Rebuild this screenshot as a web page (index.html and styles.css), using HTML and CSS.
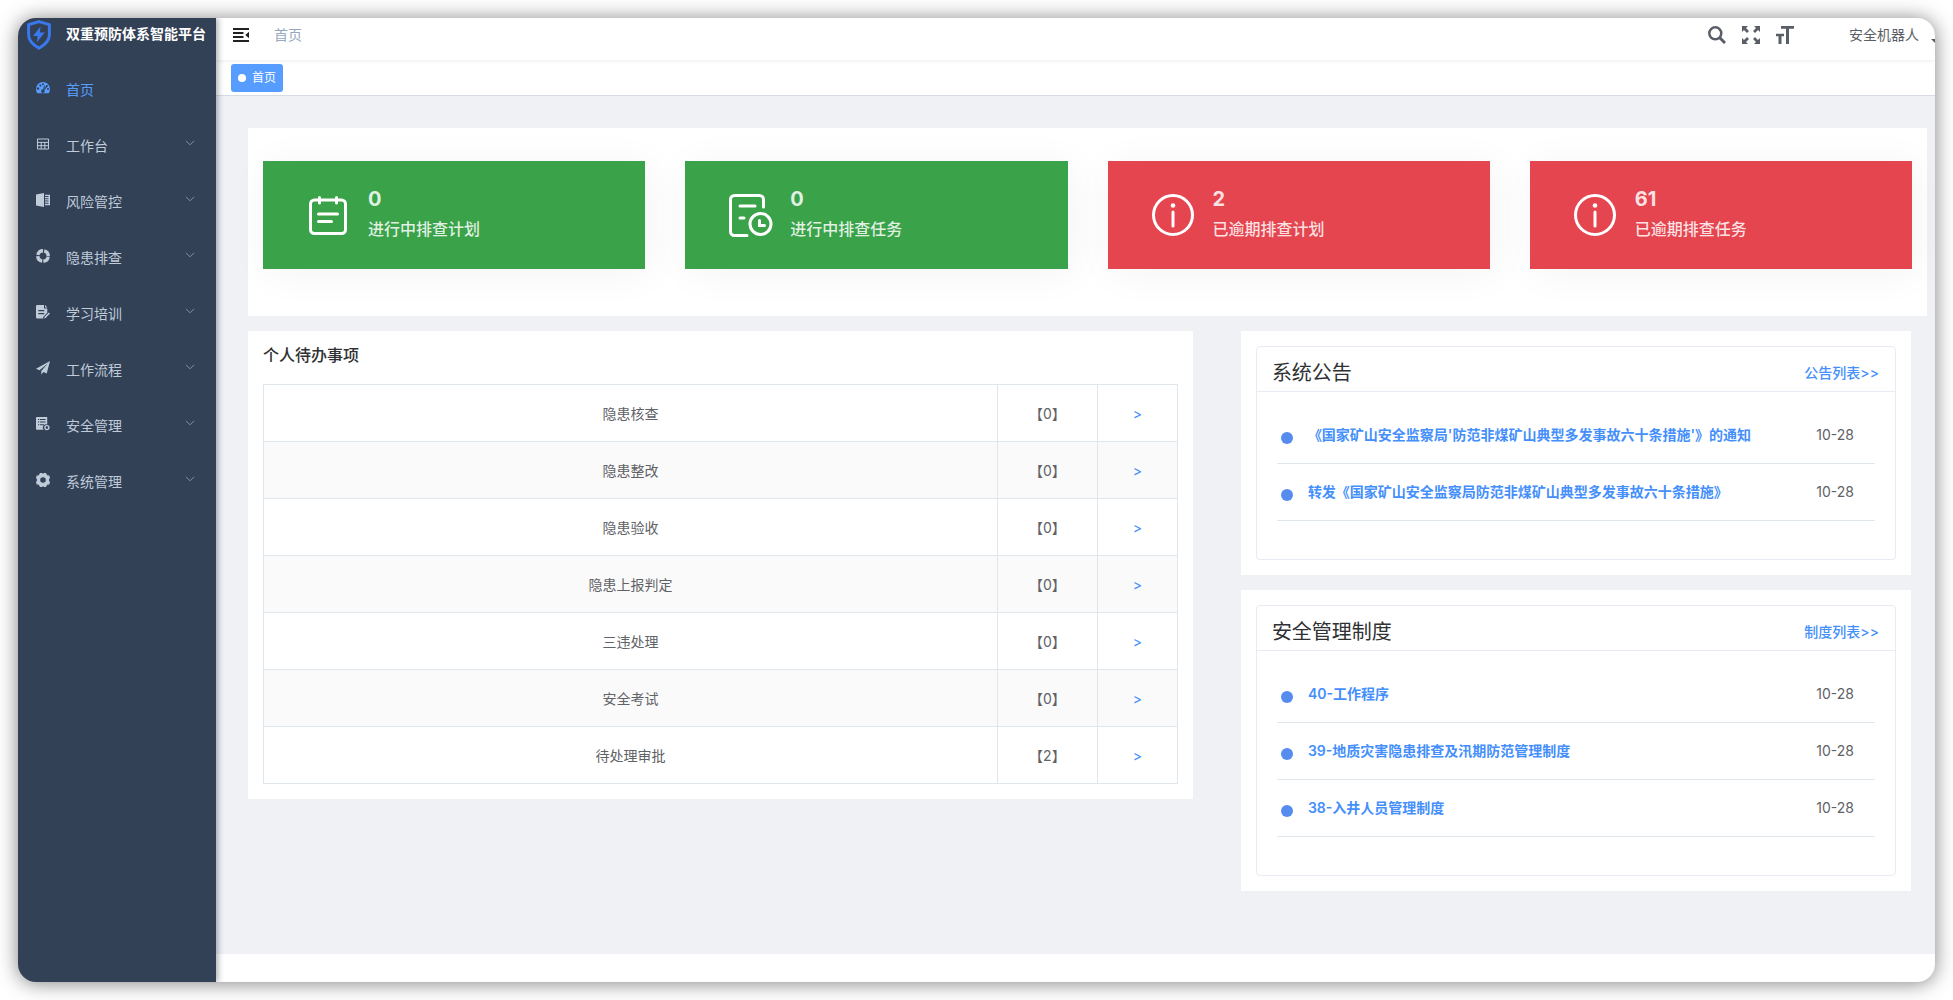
FILE: index.html
```html
<!DOCTYPE html>
<html lang="zh-CN">
<head>
<meta charset="utf-8">
<meta name="viewport" content="width=device-width, initial-scale=1">
<title>双重预防体系智能平台</title>
<link rel="stylesheet" href="styles.css">
</head>
<body>
<div class="window">
  <aside class="sidebar">
    <a class="logo" href="#">
      <svg class="logo-icon" viewBox="0 0 24 30" aria-hidden="true"><path d="M12 1.6 22.4 4.6V15c0 5.6-4.2 9.6-10.4 13.2C5.800 24.600 1.600 20.600 1.600 15V4.600z" fill="none" stroke="#3a78ee" stroke-width="3" stroke-linejoin="round"/><path d="M13.600 6.500 6 16h4.700l-1 6.500L17.800 12.600h-5z" fill="#3a78ee"/></svg>
      <span>双重预防体系智能平台</span>
    </a>
    <nav class="menu">
      <a class="menu-item active" href="#">
        <svg class="menu-icon" viewBox="0 0 14 14" aria-hidden="true"><path fill-rule="evenodd" d="M7 1a7 7 0 0 0-7 7c0 1.700.5 3.100 1.300 4.300h11.400A7.600 7.600 0 0 0 14 8a7 7 0 0 0-7-7zM3 6.900a1 1 0 1 1-2 1.300A1 1 0 0 1 3 6.900zM4.100 3.600a1 1 0 1 1-.6 1.500 1 1 0 0 1 .6-1.500zM7 2.200a1 1 0 1 1 0 2 1 1 0 0 1 0-2zM10 4.700a1 1 0 1 1 1 1.200L8.300 9.200a1.700 1.700 0 1 1-1.200-.7l1-3.900.9.200-.9 3.900zM12 7a1 1 0 1 1 0 2 1 1 0 0 1 0-2z"/></svg>
        <span>首页</span>
      </a>
      <button class="menu-item" type="button">
        <svg class="menu-icon" viewBox="0 0 14 14" aria-hidden="true"><path fill="none" stroke="currentColor" d="M1.500 2h11v10h-11zM1.500 5.400h11M1.500 8.700h11M5.200 5.400V12M8.800 5.400V12"/></svg>
        <span>工作台</span>
        <svg class="chevron" viewBox="0 0 10 6" aria-hidden="true"><path d="M1 .8 5 4.800 9 .8"/></svg>
      </button>
      <button class="menu-item" type="button">
        <svg class="menu-icon" viewBox="0 0 14 14" aria-hidden="true"><path d="M0 1.500 8 0v14l-8-1.500zM9 1.800h5v10.400H9v-1.500h3.500v-1H9V8.500h3.500v-1H9V6.300h3.500v-1H9V4.100h3.500v-1H9z"/></svg>
        <span>风险管控</span>
        <svg class="chevron" viewBox="0 0 10 6" aria-hidden="true"><path d="M1 .8 5 4.800 9 .8"/></svg>
      </button>
      <button class="menu-item" type="button">
        <svg class="menu-icon" viewBox="0 0 14 14" aria-hidden="true"><circle cx="7" cy="7" r="5.200" fill="none" stroke="currentColor" stroke-width="3.400" stroke-dasharray="6.968 1.200" stroke-dashoffset="-.6"/></svg>
        <span>隐患排查</span>
        <svg class="chevron" viewBox="0 0 10 6" aria-hidden="true"><path d="M1 .8 5 4.800 9 .8"/></svg>
      </button>
      <button class="menu-item" type="button">
        <svg class="menu-icon" viewBox="0 0 14 14" aria-hidden="true"><path fill-rule="evenodd" d="M1.200 0H8v3.500h3.300v4.300L7.200 12v1.500h-6A1.200 1.200 0 0 1 0 12.300V1.200A1.200 1.200 0 0 1 1.200 0zM2.300 5v1.200h6V5zm0 3v1.200h6V8zM9 0l2.300 2.500H9zM12.900 7.500l1.100 1.100L9.700 13l-1.500.5.400-1.700z"/></svg>
        <span>学习培训</span>
        <svg class="chevron" viewBox="0 0 10 6" aria-hidden="true"><path d="M1 .8 5 4.800 9 .8"/></svg>
      </button>
      <button class="menu-item" type="button">
        <svg class="menu-icon" viewBox="0 0 14 14" aria-hidden="true"><path d="M14 0 0 7.800l3.500 1.500L12 2.200 5.300 10v3.700l2-2.700 3.400 1.400z"/></svg>
        <span>工作流程</span>
        <svg class="chevron" viewBox="0 0 10 6" aria-hidden="true"><path d="M1 .8 5 4.800 9 .8"/></svg>
      </button>
      <button class="menu-item" type="button">
        <svg class="menu-icon" viewBox="0 0 14 14" aria-hidden="true"><path fill-rule="evenodd" d="M.8 0h10.400v7.400a3.300 3.300 0 0 0-3.600 5.300H.8A.8.800 0 0 1 0 12V.8A.8.800 0 0 1 .8 0zM2 2v1h1.200V2zm2 0v1h5.500V2zM2 4.600v1h1.200v-1zm2 0v1h5.500v-1zM2 7.200v1h1.200v-1zm2 0v1h4v-1z"/><circle cx="10.900" cy="10.600" r="2" fill="none" stroke="currentColor" stroke-width="1.400"/></svg>
        <span>安全管理</span>
        <svg class="chevron" viewBox="0 0 10 6" aria-hidden="true"><path d="M1 .8 5 4.800 9 .8"/></svg>
      </button>
      <button class="menu-item" type="button">
        <svg class="menu-icon" viewBox="0 0 14 14" aria-hidden="true"><path fill-rule="evenodd" d="M4 0h2l1 .8L8 0h2l1.200 2.300 2 .3.800 2L12.900 7l1.100 2.400-.8 2-2 .3L10 14H8l-1-.8-1 .8H4l-1.200-2.300-2-.3-.8-2L1.100 7 0 4.600l.8-2 2-.3zM7 4.200a2.800 2.800 0 1 0 0 5.600 2.800 2.800 0 0 0 0-5.600z"/></svg>
        <span>系统管理</span>
        <svg class="chevron" viewBox="0 0 10 6" aria-hidden="true"><path d="M1 .8 5 4.800 9 .8"/></svg>
      </button>
    </nav>
  </aside>

  <div class="main">
    <header class="navbar">
      <button class="icon-button" type="button" aria-label="收起菜单">
        <svg class="fold-icon" viewBox="0 0 16 14" aria-hidden="true"><path d="M0 0h16v2H0zM0 4h10.500v2H0zM0 8h10.500v2H0zM0 12h16v2H0zM16 3.800v6.400L12.300 7z"/></svg>
      </button>
      <span class="breadcrumb">首页</span>
      <div class="tools">
        <button class="icon-button" type="button" aria-label="搜索">
          <svg class="tool-icon" viewBox="0 0 18 18" aria-hidden="true"><g fill="none" stroke="currentColor"><circle cx="7.300" cy="7.300" r="6" stroke-width="2.500"/><path d="M11.800 11.800 17 17" stroke-width="3"/></g></svg>
        </button>
        <button class="icon-button" type="button" aria-label="全屏">
          <svg class="tool-icon" viewBox="0 0 18 18" aria-hidden="true"><path d="M0 0h6L4 2l3 3-2 2-3-3-2 2zM18 0v6l-2-2-3 3-2-2 3-3-2-2zM0 18v-6l2 2 3-3 2 2-3 3 2 2zM18 18h-6l2-2-3-3 2-2 3 3 2-2z"/></svg>
        </button>
        <button class="icon-button" type="button" aria-label="字号">
          <svg class="tool-icon" viewBox="0 0 18 18" aria-hidden="true"><path d="M5 0h13v2.800h-5V18h-3V2.800H5zM0 7.700h8v2.600H5.500V18H2.500v-7.700H0z"/></svg>
        </button>
        <button class="user" type="button">安全机器人 <svg class="caret" viewBox="0 0 10 5" aria-hidden="true"><path d="M0 0h10L5 5z"/></svg></button>
      </div>
    </header>

    <div class="tags">
      <a class="tag" href="#">首页</a>
    </div>

    <main class="content">
      <section class="stats">
        <a class="stat green" href="#">
          <svg class="stat-icon" viewBox="0 0 50 50" aria-hidden="true"><rect x="7.500" y="10" width="35" height="33.500" rx="4"/><path d="M16.500 7.500v5.500M33.500 7.500v5.500M15.500 24h19M15.500 31.500h13"/></svg>
          <span class="stat-text"><strong>0</strong><span>进行中排查计划</span></span>
        </a>
        <a class="stat green" href="#">
          <svg class="stat-icon" viewBox="0 0 50 50" aria-hidden="true"><path d="M22 45.500H9.500a4 4 0 0 1-4-4v-32a4 4 0 0 1 4-4h25a4 4 0 0 1 4 4V17M15 16h15M15 28h4M34.500 30.500v5h5"/><circle cx="35.500" cy="34" r="10.500"/></svg>
          <span class="stat-text"><strong>0</strong><span>进行中排查任务</span></span>
        </a>
        <a class="stat red" href="#">
          <svg class="stat-icon" viewBox="0 0 50 50" aria-hidden="true"><circle cx="25" cy="25" r="19.500"/><path d="M25 22v14"/><circle class="dot" cx="25" cy="15.500" r="2.300"/></svg>
          <span class="stat-text"><strong>2</strong><span>已逾期排查计划</span></span>
        </a>
        <a class="stat red" href="#">
          <svg class="stat-icon" viewBox="0 0 50 50" aria-hidden="true"><circle cx="25" cy="25" r="19.500"/><path d="M25 22v14"/><circle class="dot" cx="25" cy="15.500" r="2.300"/></svg>
          <span class="stat-text"><strong>61</strong><span>已逾期排查任务</span></span>
        </a>
      </section>

      <div class="columns">
        <section class="panel">
          <h2 class="panel-title">个人待办事项</h2>
          <table class="todo">
            <colgroup><col><col class="col-count"><col class="col-link"></colgroup>
            <tbody>
              <tr><td>隐患核查</td><td>【0】</td><td><a href="#">&gt;</a></td></tr>
              <tr><td>隐患整改</td><td>【0】</td><td><a href="#">&gt;</a></td></tr>
              <tr><td>隐患验收</td><td>【0】</td><td><a href="#">&gt;</a></td></tr>
              <tr><td>隐患上报判定</td><td>【0】</td><td><a href="#">&gt;</a></td></tr>
              <tr><td>三违处理</td><td>【0】</td><td><a href="#">&gt;</a></td></tr>
              <tr><td>安全考试</td><td>【0】</td><td><a href="#">&gt;</a></td></tr>
              <tr><td>待处理审批</td><td>【2】</td><td><a href="#">&gt;</a></td></tr>
            </tbody>
          </table>
        </section>

        <div class="side">
          <section class="panel">
            <div class="card">
              <div class="card-head"><h2>系统公告</h2><a href="#">公告列表&gt;&gt;</a></div>
              <ul class="news">
                <li><a href="#">《国家矿山安全监察局'防范非煤矿山典型多发事故六十条措施'》的通知</a><time>10-28</time></li>
                <li><a href="#">转发《国家矿山安全监察局防范非煤矿山典型多发事故六十条措施》</a><time>10-28</time></li>
              </ul>
            </div>
          </section>
          <section class="panel">
            <div class="card">
              <div class="card-head"><h2>安全管理制度</h2><a href="#">制度列表&gt;&gt;</a></div>
              <ul class="news">
                <li><a href="#">40-工作程序</a><time>10-28</time></li>
                <li><a href="#">39-地质灾害隐患排查及汛期防范管理制度</a><time>10-28</time></li>
                <li><a href="#">38-入井人员管理制度</a><time>10-28</time></li>
              </ul>
            </div>
          </section>
        </div>
      </div>
    </main>
  </div>
</div>
</body>
</html>
```
FILE: styles.css
```css
*,
*::before {
  box-sizing: border-box;
}

body {
  margin: 0;
  min-height: 100vh;
  padding: 18px;
  display: flex;
  background: #fff;
  color: #606266;
  font: 14px/20px Inter, "Noto Sans CJK SC", sans-serif;
}

a {
  color: #448ffb;
  text-decoration: none;
}

button {
  border: 0;
  padding: 0;
  background: none;
  color: inherit;
  font: inherit;
  cursor: pointer;
}

svg {
  display: block;
  flex: none;
  fill: currentColor;
}

h2 {
  margin: 0;
}

.window {
  flex: 1;
  min-width: 0;
  display: flex;
  overflow: hidden;
  border-radius: 18px;
  background: #fff;
  box-shadow: 0 1px 20px rgba(0, 0, 0, .5);
}

/* Sidebar */
.sidebar {
  z-index: 1;
  flex: none;
  width: 198px;
  background: #334157;
  box-shadow: 2px 0 6px rgba(0, 21, 41, .35);
}

.logo {
  display: flex;
  align-items: flex-start;
  gap: 15px;
  height: 44px;
  padding: 2px 0 0 9px;
  color: #fff;
  font-weight: 600;
  line-height: 28px;
  white-space: nowrap;
}

.logo-icon {
  width: 24px;
  height: 30px;
}

.menu-item {
  display: flex;
  align-items: center;
  width: 100%;
  height: 56px;
  padding: 0 21px 0 18px;
  color: #bfcbd9;
}

.menu-item.active {
  color: #579dff;
}

.menu-icon {
  width: 14px;
  height: 14px;
  margin: 0 16px 4px 0;
}

.chevron {
  width: 10px;
  height: 6px;
  margin: 0 0 6px auto;
  fill: none;
  stroke: #8691a0;
}

/* Header */
.main {
  flex: 1;
  min-width: 0;
  display: flex;
  flex-direction: column;
  padding-bottom: 28px;
}

.navbar {
  display: flex;
  align-items: center;
  height: 42px;
  padding: 0 0 8px 17px;
  box-shadow: 0 1px 4px rgba(0, 21, 41, .08);
}

.fold-icon {
  width: 16px;
  height: 14px;
  color: #222;
}

.breadcrumb {
  margin-left: 25px;
  color: #97a8be;
}

.tools {
  display: flex;
  align-items: center;
  gap: 16px;
  margin: 0 -6px 0 auto;
  color: #5a5e66;
}

.tool-icon {
  width: 18px;
  height: 18px;
}

.user {
  display: flex;
  align-items: center;
  gap: 12px;
  margin-left: 39px;
}

.caret {
  width: 10px;
  height: 5px;
  margin-top: 12px;
}

.tags {
  display: flex;
  height: 36px;
  padding: 4px 15px;
  border-bottom: 1px solid #d8dce5;
}

.tag {
  display: flex;
  align-items: center;
  gap: 6px;
  height: 28px;
  padding: 0 7px;
  border-radius: 3px;
  background: #579dff;
  color: #fff;
  font-size: 12px;
}

.tag::before {
  content: "";
  width: 8px;
  height: 8px;
  border-radius: 50%;
  background: #fff;
}

/* Content */
.content {
  flex: 1;
  padding: 32px 8px 32px 32px;
  background: #f0f1f5;
}

.stats {
  display: grid;
  grid-template-columns: repeat(4, 1fr);
  gap: 40px;
  padding: 33px 15px 47px;
  background: #fff;
}

.stat {
  display: flex;
  align-items: center;
  gap: 15px;
  height: 108px;
  padding-left: 40px;
  box-shadow: 4px 4px 40px rgba(0, 0, 0, .05);
  color: #fff;
}

.green {
  background: #3aa249;
}

.red {
  background: #e5454f;
}

.stat-icon {
  width: 50px;
  height: 50px;
  fill: none;
  stroke: #fff;
  stroke-width: 3;
  stroke-linecap: round;
}

.stat-icon .dot {
  fill: #fff;
  stroke: none;
}

.stat-text {
  display: grid;
  gap: 6px;
  padding-bottom: 2px;
  color: rgba(255, 255, 255, .85);
  font-size: 16px;
  font-weight: 500;
  line-height: 24px;
}

.stat-text strong {
  font-size: 20px;
  font-weight: 700;
}

.columns {
  display: grid;
  grid-template-columns: 141fr 100fr;
  align-items: start;
  gap: 48px;
  margin: 15px 16px 0 0;
}

.side {
  display: grid;
  gap: 15px;
}

.panel {
  padding: 15px;
  background: #fff;
}

.panel-title {
  margin-bottom: 20px;
  color: #303133;
  font-size: 16px;
  font-weight: 500;
  line-height: 18px;
}

.todo {
  width: 100%;
  table-layout: fixed;
  border-collapse: collapse;
}

.col-count {
  width: 100px;
}

.col-link {
  width: 80px;
}

.todo td {
  height: 57px;
  padding: 1px 0 0;
  border: 1px solid #dfe6ec;
  text-align: center;
}

.todo tr:nth-child(even) {
  background: #fafafa;
}

.card {
  border: 1px solid #e6ebf5;
  border-radius: 4px;
}

.card-head {
  display: flex;
  align-items: center;
  justify-content: space-between;
  height: 45px;
  padding: 8px 16px 0 15px;
  border-bottom: 1px solid #e6ebf5;
}

.card-head h2 {
  color: #303133;
  font-size: 20px;
  font-weight: 400;
}

.card-head a {
  font-weight: 500;
}

.news {
  margin: 0;
  padding: 15px 20px 38px;
  list-style: none;
}

.news li {
  display: flex;
  align-items: center;
  height: 57px;
  padding: 0 21px 0 4px;
  border-bottom: 1px solid #dfe6ec;
}

.news li::before {
  content: "";
  flex: none;
  width: 12px;
  height: 12px;
  margin: 6px 15px 0 0;
  border-radius: 50%;
  background: #568bef;
}

.news a {
  font-weight: 600;
}

.news time {
  margin-left: auto;
}
```
